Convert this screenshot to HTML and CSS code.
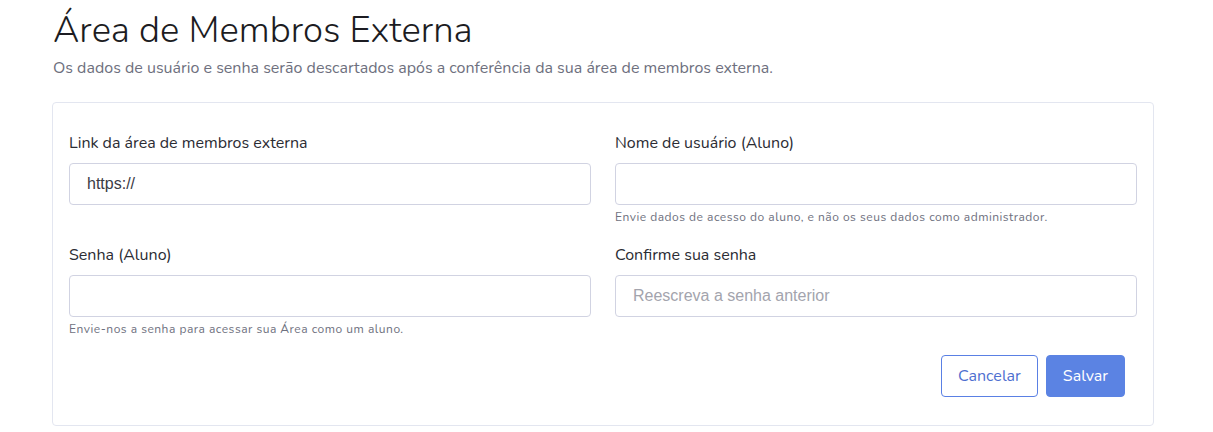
FILE: index.html
```html
<!DOCTYPE html>
<html>
<head>
    <meta charset="UTF-8">
    <title>Área de Membros Externa</title>
    <link rel="stylesheet" href="styles.css">
</head>
<body>
    <div class="page">
        <h1 class="pageTitle">Área de Membros Externa</h1>
        <p class="pageDesc">Os dados de usuário e senha serão descartados após a conferência da sua área de membros externa.</p>

        <div class="card">
            <form class="formGrid">
                <div class="field">
                    <label for="link">Link da área de membros externa</label>
                    <input type="text" id="link" class="input" value="https://">
                </div>
                <div class="field">
                    <label for="user">Nome de usuário (Aluno)</label>
                    <input type="text" id="user" class="input">
                    <small class="hint">Envie dados de acesso do aluno, e não os seus dados como administrador.</small>
                </div>
                <div class="field">
                    <label for="pass">Senha (Aluno)</label>
                    <input type="password" id="pass" class="input">
                    <small class="hint">Envie-nos a senha para acessar sua Área como um aluno.</small>
                </div>
                <div class="field">
                    <label for="pass2">Confirme sua senha</label>
                    <input type="password" id="pass2" class="input" placeholder="Reescreva a senha anterior">
                </div>
            </form>
            <div class="actions">
                <button class="btn btnOutline">Cancelar</button>
                <button class="btn btnPrimary">Salvar</button>
            </div>
        </div>
    </div>
</body>
</html>
```
FILE: styles.css
```css
/* base */
body{
    margin: 0;
    background: #fff;
    font-family: "Nunito", "Lato", sans-serif;
    color: #3a3b45;
}

.page{
    width: 1102px;
    margin-left: 52px;
}

.pageTitle{
    margin: 6px 0 0 1px;
    font-size: 36.5px;
    font-weight: 300;
    line-height: 48px;
    color: #1c1c22;
}

.pageDesc{
    margin: 3px 0 0 1px;
    font-size: 16px;
    line-height: 22px;
    color: #6e707e;
}

/* card */
.card{
    margin-top: 23px;
    border: 1px solid #e3e6f0;
    border-radius: 4px;
    padding: 29px 16px 28px 16px;
}

.formGrid{
    display: grid;
    grid-template-columns: 1fr 1fr;
    column-gap: 24px;
    row-gap: 20px;
}

.field{
    display: flex;
    flex-direction: column;
}

.field label{
    font-size: 16px;
    line-height: 22px;
    margin-bottom: 9px;
    color: #2b2c33;
}

.input{
    box-sizing: border-box;
    height: 42px;
    padding: 0 17px;
    border: 1px solid #d1d3e2;
    border-radius: 4px;
    font-family: "Liberation Sans", Arial, sans-serif;
    font-size: 16px;
    color: #3a3b45;
    outline: none;
}

.input::placeholder{
    color: #a3a4ad;
}

.hint{
    margin-top: 5px;
    font-size: 12px;
    line-height: 14px;
    color: #6e707e;
    letter-spacing: 0.5px;
}

/* buttons */
.actions{
    display: flex;
    justify-content: flex-end;
    gap: 8px;
    margin-top: 19px;
    padding-right: 12px;
}

.btn{
    height: 42px;
    padding: 0 16px;
    border-radius: 4px;
    font-family: "Nunito", "Lato", sans-serif;
    font-size: 16px;
    cursor: pointer;
}

.btnOutline{
    background: #fff;
    border: 1px solid #5a80e4;
    color: #4e6fd0;
}

.btnPrimary{
    background: #5b83e3;
    border: 1px solid #5b83e3;
    color: #fff;
}
```
